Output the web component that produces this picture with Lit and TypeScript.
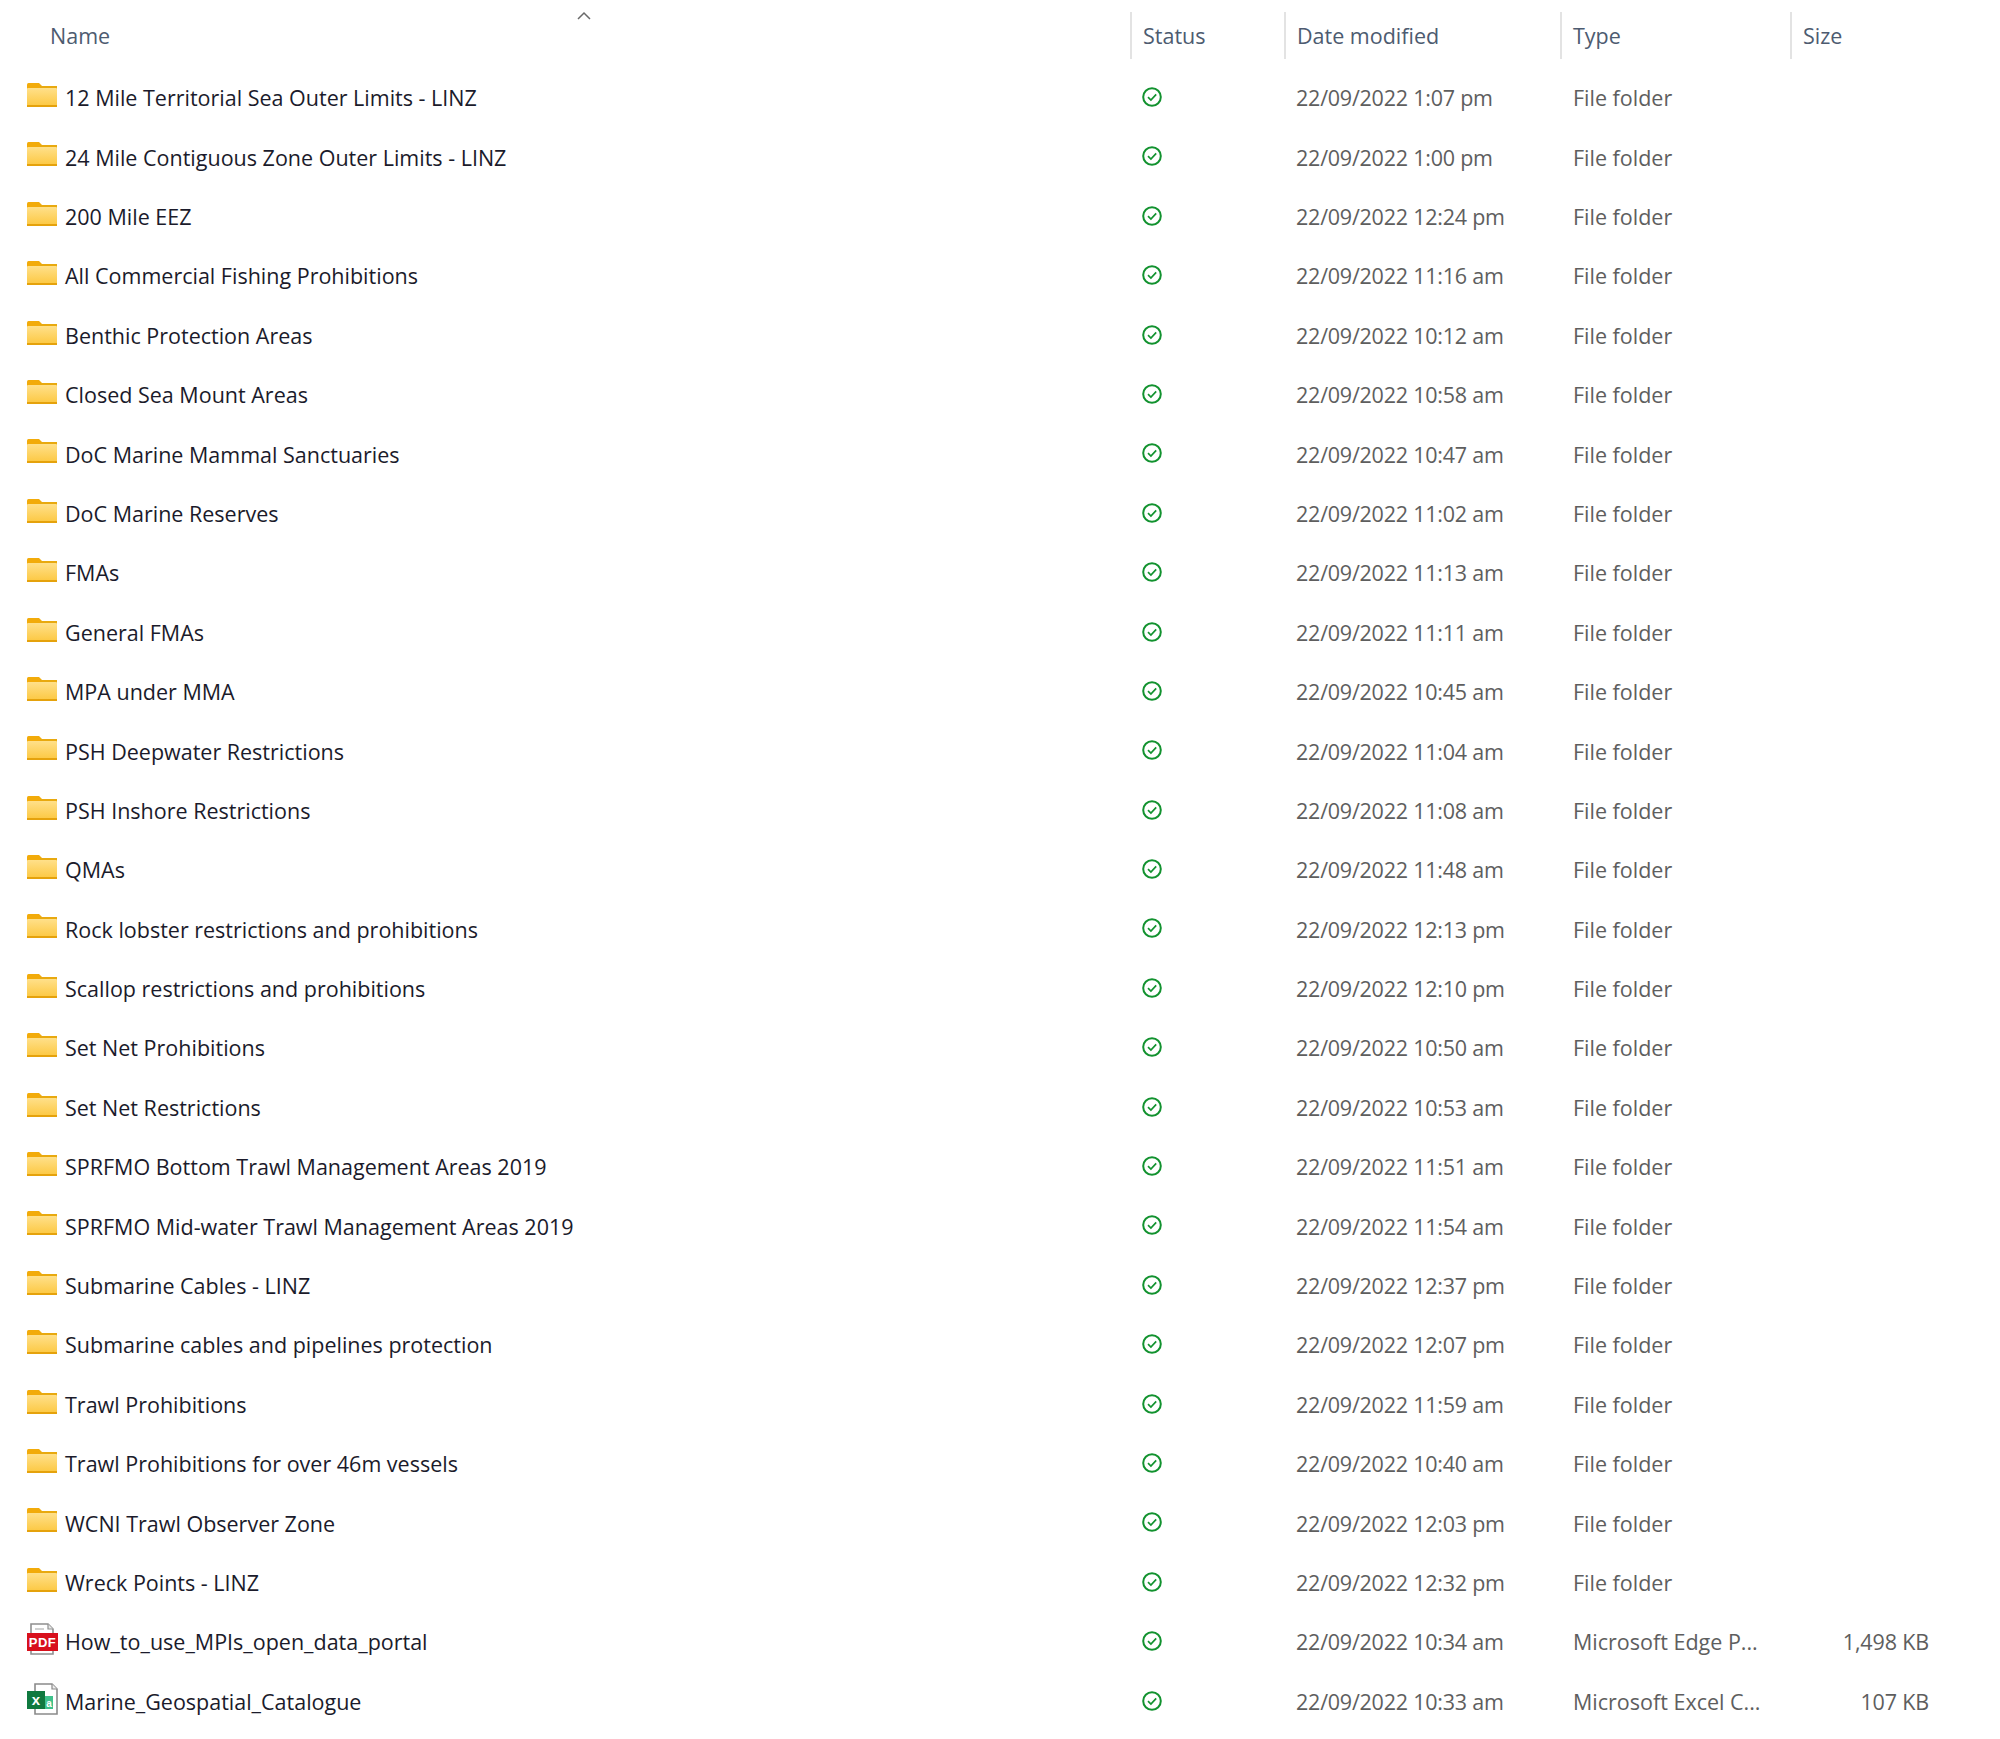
import { LitElement, html, css } from "lit";
import { customElement } from "lit/decorators.js";

type Row = [string, string, string?, string?, string?];
const rows: Row[] = [
  ["12 Mile Territorial Sea Outer Limits - LINZ", "1:07 pm"],
  ["24 Mile Contiguous Zone Outer Limits - LINZ", "1:00 pm"],
  ["200 Mile EEZ", "12:24 pm"],
  ["All Commercial Fishing Prohibitions", "11:16 am"],
  ["Benthic Protection Areas", "10:12 am"],
  ["Closed Sea Mount Areas", "10:58 am"],
  ["DoC Marine Mammal Sanctuaries", "10:47 am"],
  ["DoC Marine Reserves", "11:02 am"],
  ["FMAs", "11:13 am"],
  ["General FMAs", "11:11 am"],
  ["MPA under MMA", "10:45 am"],
  ["PSH Deepwater Restrictions", "11:04 am"],
  ["PSH Inshore Restrictions", "11:08 am"],
  ["QMAs", "11:48 am"],
  ["Rock lobster restrictions and prohibitions", "12:13 pm"],
  ["Scallop restrictions and prohibitions", "12:10 pm"],
  ["Set Net Prohibitions", "10:50 am"],
  ["Set Net Restrictions", "10:53 am"],
  ["SPRFMO Bottom Trawl Management Areas 2019", "11:51 am"],
  ["SPRFMO Mid-water Trawl Management Areas 2019", "11:54 am"],
  ["Submarine Cables - LINZ", "12:37 pm"],
  ["Submarine cables and pipelines protection", "12:07 pm"],
  ["Trawl Prohibitions", "11:59 am"],
  ["Trawl Prohibitions for over 46m vessels", "10:40 am"],
  ["WCNI Trawl Observer Zone", "12:03 pm"],
  ["Wreck Points - LINZ", "12:32 pm"],
  ["How_to_use_MPIs_open_data_portal", "10:34 am", "Microsoft Edge P...", "1,498 KB", "pdf"],
  ["Marine_Geospatial_Catalogue", "10:33 am", "Microsoft Excel C...", "107 KB", "xls"],
];

const folder = html`<svg class="ico" width="32" height="26" viewBox="0 0 32 26">
  <defs><linearGradient id="fg" x1="0" y1="0" x2="0" y2="1"><stop offset="0" stop-color="#ffe08a"/><stop offset="1" stop-color="#fcc73f"/></linearGradient></defs>
  <path d="M1 2.5Q1 1 2.5 1H13L16 4V8H1Z" fill="#f2ab0a"/>
  <path d="M14 4H31V8H14Z" fill="#e8a90f"/>
  <rect x="1" y="6" width="30" height="19" rx="1" fill="url(#fg)"/>
  <rect x="1" y="23" width="30" height="2" fill="#e5a20c"/>
</svg>`;

const pdf = html`<svg class="ico" width="32" height="32" viewBox="0 0 32 32">
  <path d="M5 1H22L27 6V31H5Z" fill="#fff" stroke="#8f8f8f" stroke-width="1.6"/>
  <path d="M22 1V6H27" fill="#e8e8e8" stroke="#8f8f8f" stroke-width="1.2"/>
  <path d="M9 6H18" stroke="#bdbdbd" stroke-width="1.4"/>
  <rect x="1" y="10" width="31" height="18" fill="#d8101c"/>
  <text x="16.5" y="24" text-anchor="middle" class="pdf">PDF</text>
</svg>`;

const xls = html`<svg class="ico" width="32" height="32" viewBox="0 0 32 32">
  <path d="M9 1H26L31 6V31H9Z" fill="#fff" stroke="#8a8a8a" stroke-width="1.6"/>
  <path d="M26 1V6H31" fill="#eee" stroke="#8a8a8a" stroke-width="1.2"/>
  <rect x="19" y="13" width="8" height="13" fill="#3fc28c"/>
  <text x="23" y="23.5" text-anchor="middle" class="xa">a</text>
  <rect x="1" y="8" width="18" height="18" fill="#10793f"/>
  <text x="10" y="22" text-anchor="middle" class="xx">x</text>
</svg>`;

const check = html`<svg class="chk" width="20" height="20" viewBox="0 0 20 20" fill="none">
  <circle cx="10" cy="10" r="8.8" stroke="#12922f" stroke-width="2"/>
  <path d="M6 10.2L8.9 13L14.2 7.3" stroke="#12922f" stroke-width="1.7"/>
</svg>`;

@customElement("app-root")
export class AppRoot extends LitElement {
  static styles = css`
    :host { display: block; width: 2000px; height: 1739px; background: #fff; overflow: hidden;
      font-family: "Open Sans", "Noto Sans", sans-serif; font-size: 21.5px; }
    .grid { display: grid; grid-template-columns: 1130px 154px 276px 230px 153px; width: 1943px; }
    .hdr { height: 67.3px; color: #4d5b70; position: relative; }
    .hdr > div { display: flex; align-items: center; height: 47px; margin-top: 12px; padding-left: 11px; border-left: 2px solid #e3e3e3; box-sizing: border-box; }
    .hdr > div:first-child { border-left: none; padding-left: 50px; }
    .hdr > div:last-child { border-right: 2px solid #e3e3e3; }
    .chev { position: absolute; left: 576px; top: 11px; }
    .row { height: 59.4px; color: #5e5e5e; }
    .row > div { padding-left: 13px; padding-top: 1.5px; box-sizing: border-box; white-space: nowrap; height: 59.4px; display: flex; align-items: center; }
    .row > .name { color: #1b1b2b; padding-left: 26px; }
    .row > .date { padding-left: 12px; letter-spacing: -0.23px; }
    .ico { flex: none; margin-right: 7px; margin-top: -5.5px; }
    .row > .size { justify-content: flex-end; padding-right: 14px; padding-left: 0; letter-spacing: -0.15px; }
    .row > .st { padding-left: 12px; }
    .chk { margin-top: -1.5px; }
    .pdf { font: 700 13px "Liberation Sans", sans-serif; fill: #fff; letter-spacing: 0.5px; }
    .xa { font: 700 10px "Liberation Sans", sans-serif; fill: #fff; }
    .xx { font: 700 15px "Liberation Sans", sans-serif; fill: #fff; }
  `;

  render() {
    return html`
      <div class="grid hdr">
        <div>Name</div><div>Status</div><div>Date modified</div><div>Type</div><div>Size</div>
        <svg class="chev" width="16" height="10" viewBox="0 0 16 10" fill="none"><path d="M2 8L8 2L14 8" stroke="#6a6a6a" stroke-width="1.5"/></svg>
      </div>
      ${rows.map((r) => html`
        <div class="grid row">
          <div class="name">${r[4] === "pdf" ? pdf : r[4] === "xls" ? xls : folder}<span>${r[0]}</span></div>
          <div class="st">${check}</div>
          <div class="date">22/09/2022 ${r[1]}</div>
          <div>${r[2] ?? "File folder"}</div>
          <div class="size">${r[3] ?? ""}</div>
        </div>`)}
    `;
  }
}
